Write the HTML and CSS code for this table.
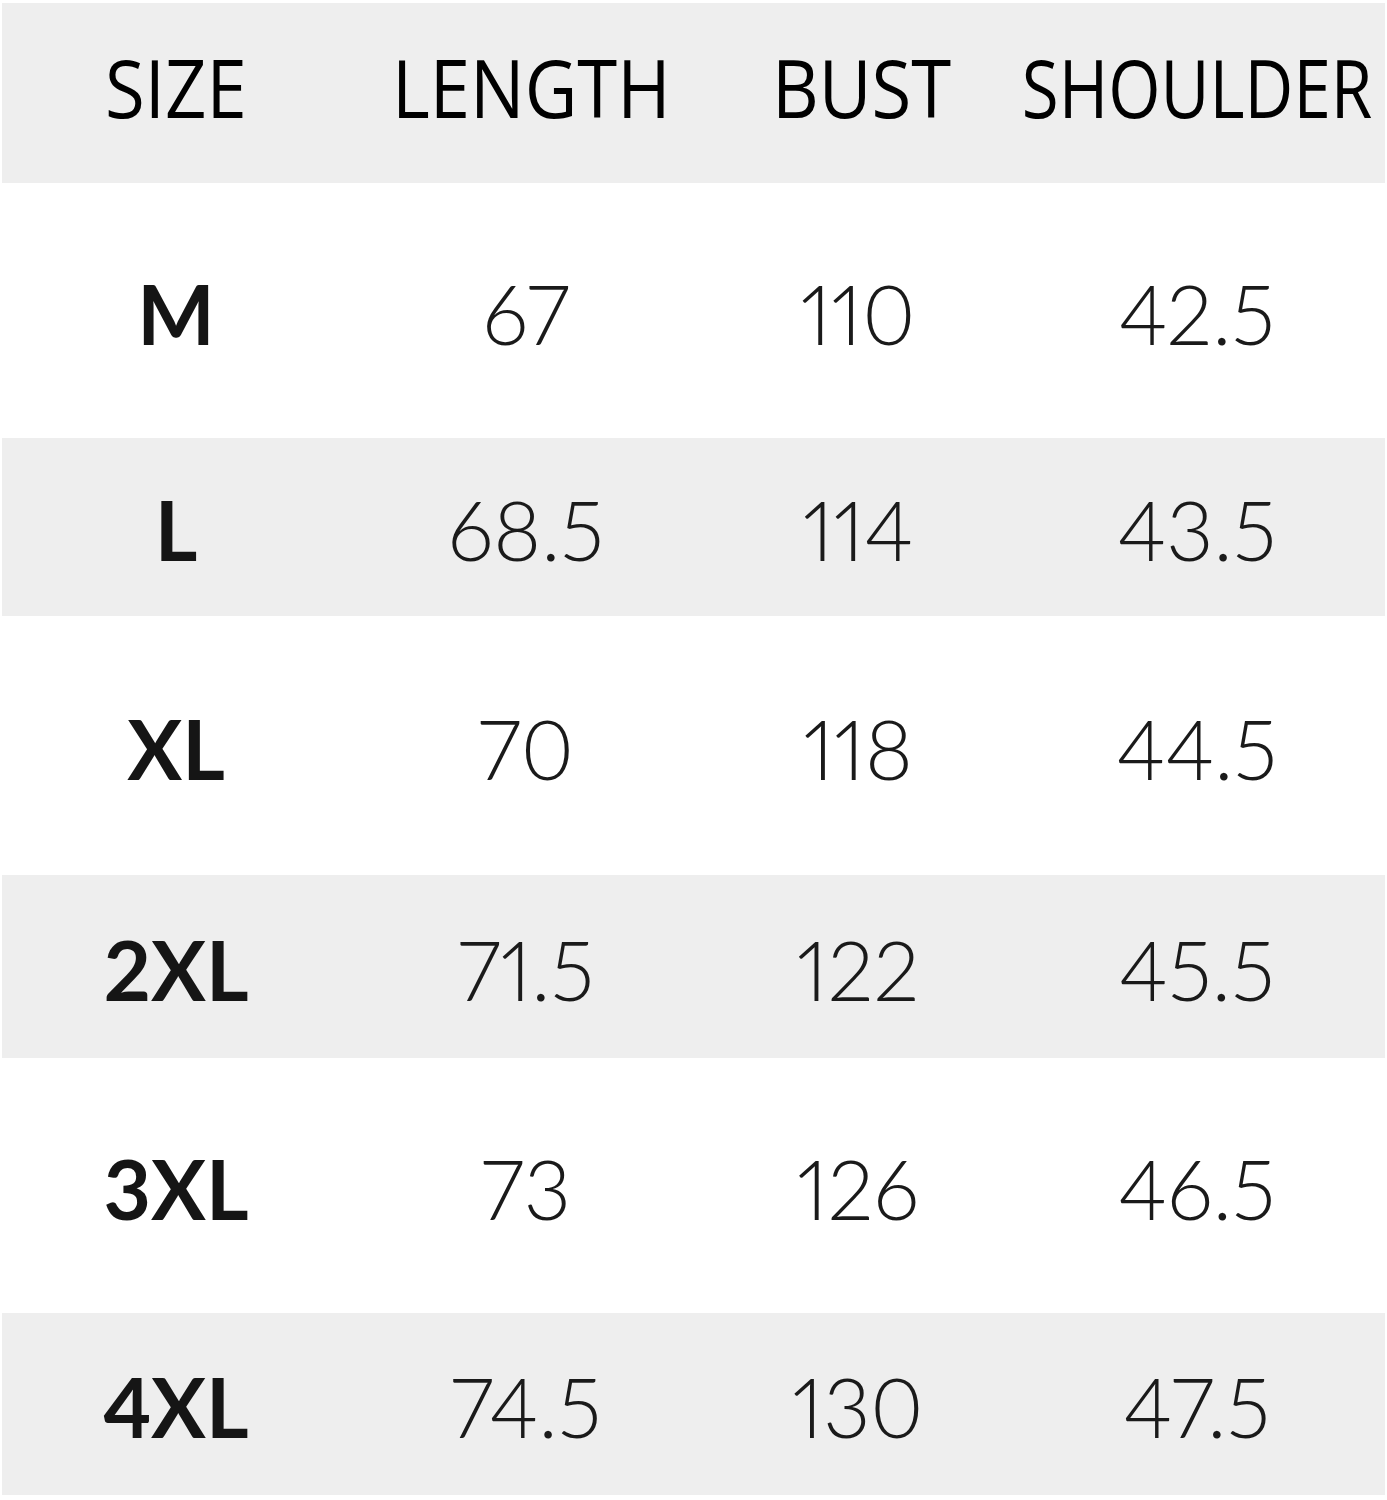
FILE: index.html
```html
<!DOCTYPE html>
<html lang="en">
<head>
<meta charset="utf-8">
<title>Size Chart</title>
<link rel="stylesheet" href="styles.css">
</head>
<body>
<div class="chart">
  <div class="row head">
    <div class="cell">SIZE</div>
    <div class="cell shift-md">LENGTH</div>
    <div class="cell shift-sm">BUST</div>
    <div class="cell narrow">SHOULDER</div>
  </div>
  <div class="row white r1">
    <div class="cell size">M</div>
    <div class="cell num">67</div>
    <div class="cell num">110</div>
    <div class="cell num">42.5</div>
  </div>
  <div class="row gray r2">
    <div class="cell size">L</div>
    <div class="cell num">68.5</div>
    <div class="cell num">114</div>
    <div class="cell num">43.5</div>
  </div>
  <div class="row white r3">
    <div class="cell size">XL</div>
    <div class="cell num">70</div>
    <div class="cell num">118</div>
    <div class="cell num">44.5</div>
  </div>
  <div class="row gray r4">
    <div class="cell size">2XL</div>
    <div class="cell num">71.5</div>
    <div class="cell num">122</div>
    <div class="cell num">45.5</div>
  </div>
  <div class="row white r5">
    <div class="cell size">3XL</div>
    <div class="cell num">73</div>
    <div class="cell num">126</div>
    <div class="cell num">46.5</div>
  </div>
  <div class="row gray r6">
    <div class="cell size">4XL</div>
    <div class="cell num">74.5</div>
    <div class="cell num">130</div>
    <div class="cell num">47.5</div>
  </div>
</div>
</body>
</html>
```

FILE: styles.css
```css
html, body {
  margin: 0;
  padding: 0;
  background: #ffffff;
}

.chart {
  padding: 3px 2px 0 2px;
  width: 1383px;
}

.row {
  display: grid;
  grid-template-columns: 348px 352px 312px 366px;
  align-items: center;
}

.head {
  height: 180px;
  background: #eeeeee;
  font-family: "Open Sans", "Noto Sans", sans-serif;
  font-size: 81px;
  font-weight: 400;
  color: #000000;
}

.head .cell {
  display: flex;
  justify-content: center;
  padding-bottom: 14px;
  transform: scaleX(0.895);
}

.head .cell.shift-md {
  padding-left: 12px;
}

.head .cell.shift-sm {
  padding-left: 8px;
}

.head .cell.narrow {
  transform: scaleX(0.83);
}

.cell {
  text-align: center;
  line-height: 1;
  white-space: nowrap;
}

.gray { background: #eeeeee; }
.white { background: #ffffff; }

.r1 { height: 255px; }
.r2 { height: 178px; }
.r3 { height: 259px; }
.r4 { height: 183px; }
.r5 { height: 255px; }
.r6 { height: 182px; }

.size {
  font-family: "Lato", sans-serif;
  font-weight: 700;
  font-size: 82px;
  color: #151515;
  padding-top: 4px;
}

.num {
  font-family: "Lato", sans-serif;
  font-weight: 300;
  font-size: 82px;
  color: #1a1a1a;
  font-variant-numeric: proportional-nums;
  padding-top: 4px;
}
```
